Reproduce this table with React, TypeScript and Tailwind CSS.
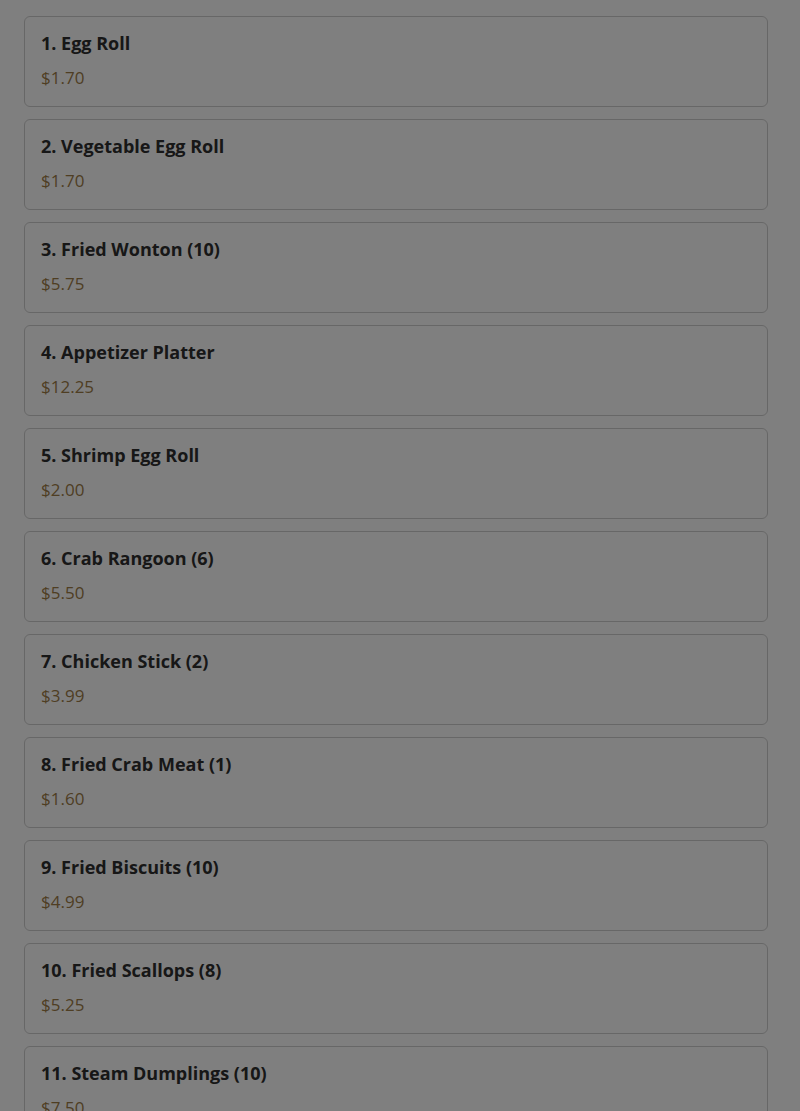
import React from 'react';

const items = [
  { name: '1. Egg Roll', price: '$1.70' },
  { name: '2. Vegetable Egg Roll', price: '$1.70' },
  { name: '3. Fried Wonton (10)', price: '$5.75' },
  { name: '4. Appetizer Platter', price: '$12.25' },
  { name: '5. Shrimp Egg Roll', price: '$2.00' },
  { name: '6. Crab Rangoon (6)', price: '$5.50' },
  { name: '7. Chicken Stick (2)', price: '$3.99' },
  { name: '8. Fried Crab Meat (1)', price: '$1.60' },
  { name: '9. Fried Biscuits (10)', price: '$4.99' },
  { name: '10. Fried Scallops (8)', price: '$5.25' },
  { name: '11. Steam Dumplings (10)', price: '$7.50' },
  { name: '12. Fried Shrimp (10)', price: '$7.25' },
];

export default function App() {
  return (
    <div className="relative h-[1111px] overflow-hidden bg-white font-['Open_Sans',sans-serif]">
      <div className="flex flex-col gap-3 pt-4 pl-6 pr-8">
        {items.map((item) => (
          <div key={item.name} className="flex flex-col rounded-md border border-[#cfcfcf] bg-white px-4 pt-[15px] pb-4">
            <h3 className="text-[18px] font-bold leading-[22px] text-[#2e2e2e]">{item.name}</h3>
            <p className="mt-[12px] text-[17px] leading-6 text-[#9e7c47]">{item.price}</p>
          </div>
        ))}
      </div>
      {/* modal backdrop */}
      <div className="absolute inset-0 bg-black/50" />
    </div>
  );
}
